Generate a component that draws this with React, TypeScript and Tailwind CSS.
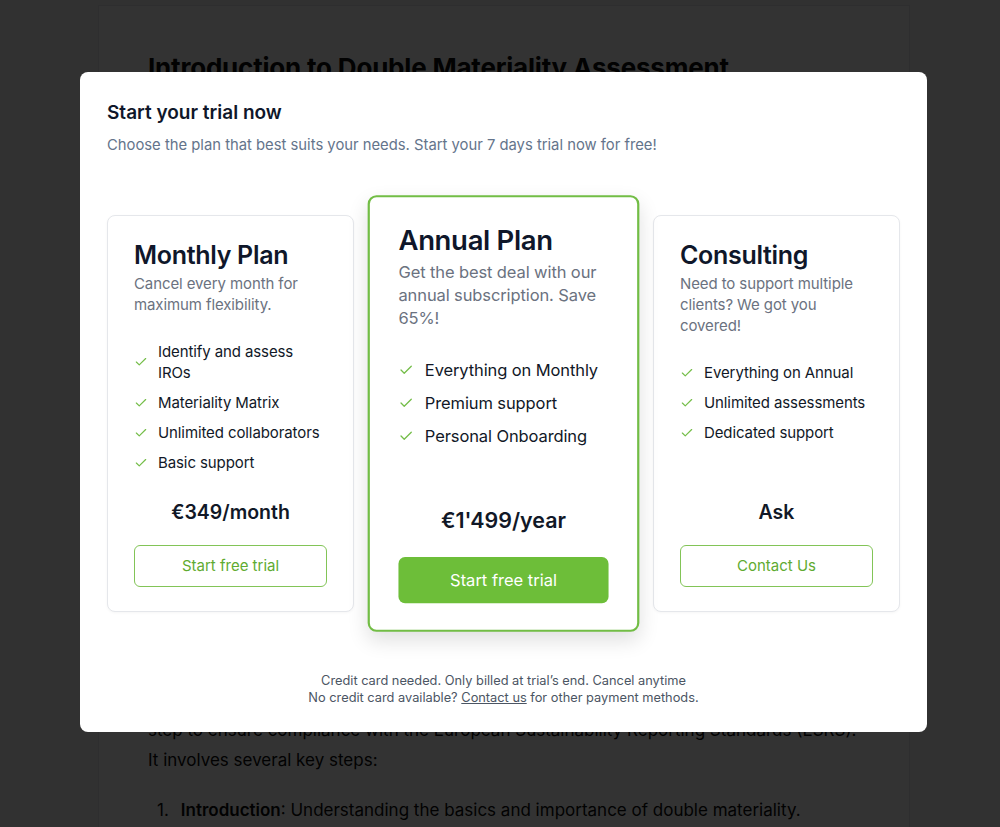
import React from 'react';
import { Check } from 'lucide-react';

interface Plan {
  name: string;
  description: string;
  features: string[];
  price: string;
  cta: string;
  highlighted?: boolean;
}

const plans: Plan[] = [
  {
    name: 'Monthly Plan',
    description: 'Cancel every month for maximum flexibility.',
    features: ['Identify and assess IROs', 'Materiality Matrix', 'Unlimited collaborators', 'Basic support'],
    price: '€349/month',
    cta: 'Start free trial',
  },
  {
    name: 'Annual Plan',
    description: 'Get the best deal with our annual subscription. Save 65%!',
    features: ['Everything on Monthly', 'Premium support', 'Personal Onboarding'],
    price: "€1'499/year",
    cta: 'Start free trial',
    highlighted: true,
  },
  {
    name: 'Consulting',
    description: 'Need to support multiple clients? We got you covered!',
    features: ['Everything on Annual', 'Unlimited assessments', 'Dedicated support'],
    price: 'Ask',
    cta: 'Contact Us',
  },
];

const PlanCard: React.FC<{ plan: Plan }> = ({ plan }) => (
  <div
    className={
      plan.highlighted
        ? 'relative z-10 flex h-[397px] scale-110 flex-col rounded-lg border-2 border-[#72bd45] bg-white px-[26px] pb-[24px] pt-[25px] shadow-[0_8px_18px_rgba(0,0,0,0.12)]'
        : 'flex h-[397px] flex-col rounded-lg border border-gray-200 bg-white px-[26px] pb-[24px] pt-[25px] shadow-[0_1px_3px_rgba(0,0,0,0.04)]'
    }
  >
    <h3 className="text-[25px] font-semibold leading-[28px] tracking-[-0.3px] text-[#0f172a]">{plan.name}</h3>
    <p className="mt-[4px] text-[15px] leading-[21px] tracking-[-0.1px] text-[#6b7280]">{plan.description}</p>

    <ul className="mt-[26px] flex flex-col gap-[9px]">
      {plan.features.map((f) => (
        <li key={f} className="flex items-center gap-[10px]">
          <Check size={14} strokeWidth={2} className="shrink-0 text-[#74bd48]" />
          <span className="text-[15px] leading-[21px] tracking-[-0.1px] text-[#111827]">{f}</span>
        </li>
      ))}
    </ul>

    <div className="mt-auto text-center text-[19.5px] font-semibold leading-[28px] text-[#111827]">{plan.price}</div>
    <button
      className={
        plan.highlighted
          ? 'mt-[19px] h-[42px] w-full rounded-md bg-[#6dbe39] text-[15px] text-white'
          : 'mt-[19px] h-[42px] w-full rounded-md border border-[#82c457] bg-white text-[15px] text-[#5fab31]'
      }
    >
      {plan.cta}
    </button>
  </div>
);

export default function App() {
  return (
    <div className="relative h-[827px] overflow-hidden bg-[#f5f5f5] font-['Inter','Liberation_Sans',sans-serif]">
      {/* page behind the dialog */}
      <div className="ml-[98px] mt-[5px] h-[900px] w-[812px] border border-gray-200 bg-white px-[49px] pt-[46px] text-[#0a0a0a]">
        <h1 className="text-[26px] font-bold leading-[32px] tracking-[-0.2px]">Introduction to Double Materiality Assessment</h1>
        <div className="mt-[631px] text-[17px] leading-[30px]">
          <p>step to ensure compliance with the European Sustainability Reporting Standards (ESRS).</p>
          <p>It involves several key steps:</p>
          <ol className="mt-[20px] pl-[9px]">
            <li className="flex gap-[12px]">
              <span>1.</span>
              <span>
                <b className="font-semibold">Introduction</b>: Understanding the basics and importance of double materiality.
              </span>
            </li>
          </ol>
        </div>
      </div>

      {/* overlay */}
      <div className="fixed inset-0 bg-black/80" />

      {/* dialog */}
      <div className="fixed inset-0 flex justify-center pl-[7px] pt-[72px]">
        <div className="h-[660px] w-[847px] rounded-lg bg-white px-[27px] pb-[26px] pt-[28px]">
          <h2 className="text-[19px] font-semibold leading-[26px] text-[#0f172a]">Start your trial now</h2>
          <p className="mt-[8px] text-[14.8px] leading-[22px] text-[#64748b]">
            Choose the plan that best suits your needs. Start your 7 days trial now for free!
          </p>

          <div className="mt-[59px] grid grid-cols-[247px_247px_247px] gap-[26px]">
            {plans.map((p) => (
              <PlanCard key={p.name} plan={p} />
            ))}
          </div>

          <div className="mt-[60px] text-center text-[12.8px] leading-[17px] text-[#4b5563]">
            <p>Credit card needed. Only billed at trial’s end. Cancel anytime</p>
            <p>
              No credit card available? <span className="underline">Contact us</span> for other payment methods.
            </p>
          </div>
        </div>
      </div>
    </div>
  );
}
